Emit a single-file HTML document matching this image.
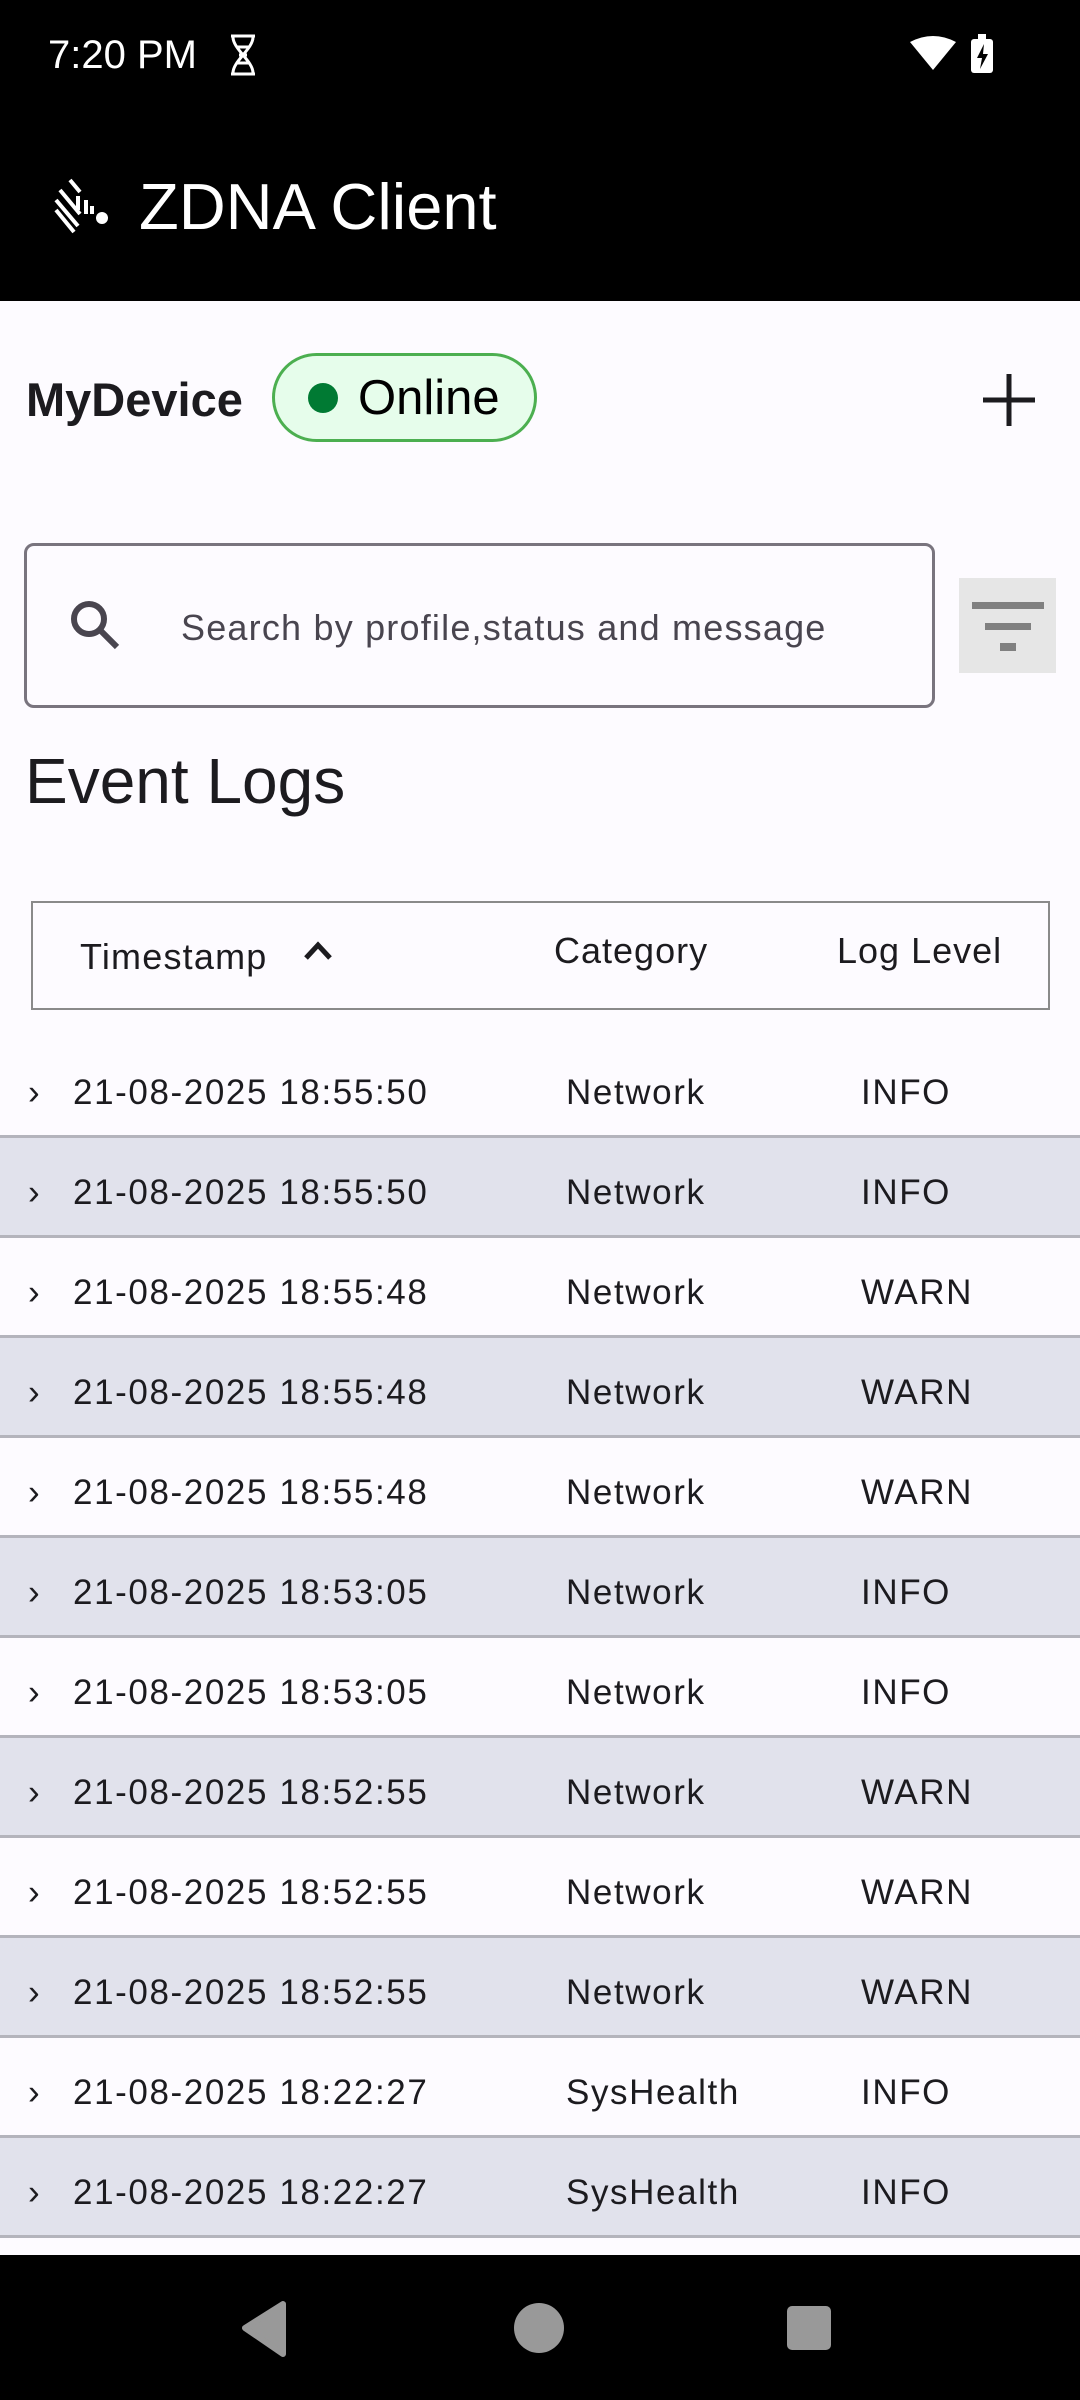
<!DOCTYPE html>
<html><head><meta charset="utf-8"><style>
*{margin:0;padding:0;box-sizing:border-box}
body{width:1080px;height:2400px;position:relative;background:#fdfbff;font-family:"Liberation Sans",sans-serif;overflow:hidden;color:#1c1b1f}
.a{position:absolute}
.row{position:absolute;left:0;width:1080px;height:100px;border-bottom:3px solid #b4b4bc;font-size:35px;letter-spacing:1.6px;color:#1c1b1f}
.row span{position:absolute;top:35px}
.alt{background:#e1e2ec}
</style></head><body>
<div class="a" style="left:0;top:0;width:1080px;height:301px;background:#000"></div>
<div class="a" style="left:48px;top:33px;color:#fff;font-size:40px">7:20 PM</div>
<svg class="a" style="left:228px;top:34px" width="30" height="42" viewBox="0 0 30 42"><path d="M3 2h24M3 40h24M5 3c0 12 20 24 20 36M25 3c0 12-20 24-20 36M9 13h12M9 29h12M11 21h8" stroke="#fff" stroke-width="3" fill="none"/></svg>
<svg class="a" style="left:908px;top:36px" width="50" height="36" viewBox="0 0 50 36"><path d="M2 6Q25-6 48 6L25 34Z" fill="#fff"/><text x="33" y="30" font-size="18" fill="#000" font-family="Liberation Sans">4</text></svg>
<svg class="a" style="left:970px;top:34px" width="26" height="40" viewBox="0 0 26 40"><rect x="1" y="5" width="22" height="34" rx="3" fill="#fff"/><rect x="8" y="0" width="8" height="6" fill="#fff"/><path d="M14 10l-7 14h5l-2 11 8-15h-5z" fill="#000"/></svg>
<svg class="a" style="left:52px;top:176px" width="60" height="64" viewBox="0 0 60 64"><g stroke="#fff" stroke-width="4" fill="none"><path d="M4 24l22 26M4 34l18 22M8 14l20 24M18 4l10 12M26 20v14M34 24v14M40 30v8"/></g><circle cx="50" cy="42" r="6" fill="#fff"/></svg>
<div class="a" style="left:139px;top:169px;color:#fff;font-size:65px">ZDNA Client</div>

<div class="a" style="left:26px;top:372px;font-size:47px;font-weight:bold;color:#1c1b1f">MyDevice</div>
<div class="a" style="left:272px;top:353px;width:265px;height:89px;border:3px solid #4caf50;border-radius:45px;background:#e6fdeb"></div>
<div class="a" style="left:308px;top:383px;width:30px;height:30px;border-radius:50%;background:#007a33"></div>
<div class="a" style="left:358px;top:370px;font-size:49px;color:#000">Online</div>
<svg class="a" style="left:979px;top:370px" width="60" height="60" viewBox="0 0 60 60"><path d="M30 4v52M4 30h52" stroke="#1c1b1f" stroke-width="5"/></svg>

<div class="a" style="left:24px;top:543px;width:911px;height:165px;border:3px solid #79747e;border-radius:10px"></div>
<svg class="a" style="left:66px;top:596px" width="60" height="60" viewBox="0 0 60 60"><circle cx="23" cy="23" r="15" stroke="#49454f" stroke-width="6" fill="none"/><path d="M34 34l17 17" stroke="#49454f" stroke-width="6"/></svg>
<div class="a" style="left:181px;top:607px;font-size:36px;color:#49454f;letter-spacing:1.2px">Search by profile,status and message</div>
<div class="a" style="left:959px;top:578px;width:97px;height:95px;background:#e6e6e6"></div>
<div class="a" style="left:972px;top:602px;width:72px;height:7px;background:#808080"></div>
<div class="a" style="left:985px;top:623px;width:46px;height:7px;background:#808080"></div>
<div class="a" style="left:1000px;top:643px;width:16px;height:8px;background:#808080"></div>

<div class="a" style="left:25px;top:744px;font-size:64px;color:#1c1b1f">Event Logs</div>

<div class="a" style="left:31px;top:901px;width:1019px;height:109px;border:2px solid #8a8a8a"></div>
<div class="a" style="left:80px;top:936px;font-size:36px;letter-spacing:1.2px">Timestamp</div>
<svg class="a" style="left:302px;top:938px" width="32" height="24" viewBox="0 0 32 24"><path d="M4 20L16 7l12 13" stroke="#1c1b1f" stroke-width="5" fill="none"/></svg>
<div class="a" style="left:554px;top:930px;font-size:36px;letter-spacing:1px">Category</div>
<div class="a" style="left:837px;top:930px;font-size:36px;letter-spacing:1px">Log Level</div>

<div class="row" style="top:1038px"><span style="left:28px">›</span><span style="left:73px">21-08-2025 18:55:50</span><span style="left:566px">Network</span><span style="left:861px">INFO</span></div>
<div class="row alt" style="top:1138px"><span style="left:28px">›</span><span style="left:73px">21-08-2025 18:55:50</span><span style="left:566px">Network</span><span style="left:861px">INFO</span></div>
<div class="row" style="top:1238px"><span style="left:28px">›</span><span style="left:73px">21-08-2025 18:55:48</span><span style="left:566px">Network</span><span style="left:861px">WARN</span></div>
<div class="row alt" style="top:1338px"><span style="left:28px">›</span><span style="left:73px">21-08-2025 18:55:48</span><span style="left:566px">Network</span><span style="left:861px">WARN</span></div>
<div class="row" style="top:1438px"><span style="left:28px">›</span><span style="left:73px">21-08-2025 18:55:48</span><span style="left:566px">Network</span><span style="left:861px">WARN</span></div>
<div class="row alt" style="top:1538px"><span style="left:28px">›</span><span style="left:73px">21-08-2025 18:53:05</span><span style="left:566px">Network</span><span style="left:861px">INFO</span></div>
<div class="row" style="top:1638px"><span style="left:28px">›</span><span style="left:73px">21-08-2025 18:53:05</span><span style="left:566px">Network</span><span style="left:861px">INFO</span></div>
<div class="row alt" style="top:1738px"><span style="left:28px">›</span><span style="left:73px">21-08-2025 18:52:55</span><span style="left:566px">Network</span><span style="left:861px">WARN</span></div>
<div class="row" style="top:1838px"><span style="left:28px">›</span><span style="left:73px">21-08-2025 18:52:55</span><span style="left:566px">Network</span><span style="left:861px">WARN</span></div>
<div class="row alt" style="top:1938px"><span style="left:28px">›</span><span style="left:73px">21-08-2025 18:52:55</span><span style="left:566px">Network</span><span style="left:861px">WARN</span></div>
<div class="row" style="top:2038px"><span style="left:28px">›</span><span style="left:73px">21-08-2025 18:22:27</span><span style="left:566px">SysHealth</span><span style="left:861px">INFO</span></div>
<div class="row alt" style="top:2138px"><span style="left:28px">›</span><span style="left:73px">21-08-2025 18:22:27</span><span style="left:566px">SysHealth</span><span style="left:861px">INFO</span></div>

<div class="a" style="left:0;top:2255px;width:1080px;height:145px;background:#000"></div>
<svg class="a" style="left:240px;top:2300px" width="600" height="60" viewBox="0 0 600 60"><path d="M5 28L43 4v50z" fill="#999" stroke="#999" stroke-width="6" stroke-linejoin="round"/><circle cx="299" cy="28" r="25" fill="#999"/><rect x="547" y="6" width="44" height="44" rx="5" fill="#999"/></svg>
</body></html>
